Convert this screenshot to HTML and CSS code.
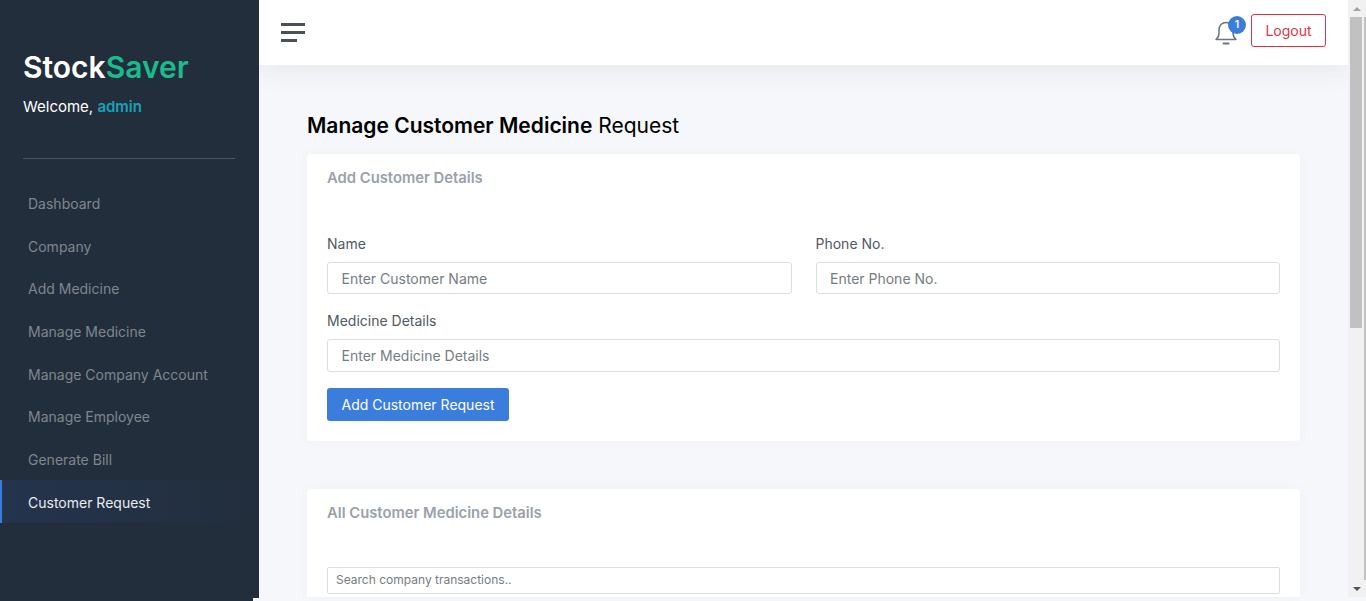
FILE: index.html
```html
<!DOCTYPE html>
<html lang="en">
<head>
    <meta charset="UTF-8">
    <meta name="viewport" content="width=device-width, initial-scale=1.0">
    <title>StockSaver - Customer Request</title>
    <link rel="stylesheet" href="styles.css">
</head>
<body>
    <aside class="sidebar">
        <div class="brand">
            <h1 class="logo">Stock<span class="logo-accent">Saver</span></h1>
            <p class="welcome">Welcome, <span class="welcome-name">admin</span></p>
        </div>
        <hr class="side-line">
        <nav class="side-nav">
            <a href="#">Dashboard</a>
            <a href="#">Company</a>
            <a href="#">Add Medicine</a>
            <a href="#">Manage Medicine</a>
            <a href="#">Manage Company Account</a>
            <a href="#">Manage Employee</a>
            <a href="#">Generate Bill</a>
            <a href="#" class="active">Customer Request</a>
        </nav>
    </aside>

    <div class="page">
        <header class="topbar">
            <button class="menu-btn" aria-label="Menu">
                <span class="bar"></span>
                <span class="bar"></span>
                <span class="bar bar-short"></span>
            </button>
            <div class="top-right">
                <div class="bell">
                    <svg width="24" height="26" viewBox="0 0 24 26" fill="none" stroke="#6c757d" stroke-width="1.5">
                        <path d="M2 19.500c2-1.600 3-3.400 3-6.500V10c0-4.400 3-7.500 7-7.500s7 3.100 7 7.500v3c0 3.100 1 4.900 3 6.500z" stroke-linejoin="round"/>
                        <path d="M9.500 23.500h5" stroke-width="2" stroke-linecap="round"/>
                    </svg>
                    <span class="badge">1</span>
                </div>
                <a href="#" class="logout">Logout</a>
            </div>
        </header>

        <main class="content">
            <h2 class="page-title"><strong>Manage Customer Medicine</strong> Request</h2>

            <section class="card card-form">
                <h3 class="card-title">Add Customer Details</h3>
                <form class="form">
                    <div class="form-row">
                        <div class="field">
                            <label for="name">Name</label>
                            <input type="text" id="name" placeholder="Enter Customer Name">
                        </div>
                        <div class="field">
                            <label for="phone">Phone No.</label>
                            <input type="text" id="phone" placeholder="Enter Phone No.">
                        </div>
                    </div>
                    <div class="field field-wide">
                        <label for="details">Medicine Details</label>
                        <input type="text" id="details" placeholder="Enter Medicine Details">
                    </div>
                    <button type="button" class="btn-add">Add Customer Request</button>
                </form>
            </section>

            <section class="card card-list">
                <h3 class="card-title">All Customer Medicine Details</h3>
                <input type="text" class="search" placeholder="Search company transactions..">
            </section>
        </main>
    </div>

    <div class="scrollbar">
        <span class="arrow arrow-up"></span>
        <div class="track"><div class="thumb"></div></div>
        <span class="arrow arrow-down"></span>
    </div>
</body>
</html>
```

FILE: styles.css
```css
* {
    box-sizing: border-box;
}

html, body {
    height: 100%;
}

body {
    margin: 0;
    display: flex;
    overflow: hidden;
    font-family: Inter, 'Liberation Sans', sans-serif;
    background-color: #f5f7fb;
}

.sidebar {
    position: relative;
    width: 259px;
    flex-shrink: 0;
    background-color: #222e3c;
    color: #fff;
}

/* small notch at the bottom corner */
.sidebar::after {
    content: "";
    position: absolute;
    right: 0;
    bottom: 0;
    width: 6px;
    height: 3px;
    background-color: #f5f7fb;
}

.brand {
    padding: 48px 23px 0;
}

.logo {
    margin: 0;
    font-size: 30px;
    line-height: 38px;
    font-weight: 600;
}

.logo-accent {
    color: #1cbb8c;
}

.welcome {
    margin: 11px 0 0;
    font-size: 15px;
    line-height: 20px;
}

.welcome-name {
    color: #17a2b8;
    font-weight: 600;
}

.side-line {
    margin: 41px 24px 0 23px;
    border: 0;
    border-top: 1px solid #4e5863;
}

.side-nav {
    display: flex;
    flex-direction: column;
    margin-top: 22px;
}

.side-nav a {
    display: block;
    height: 42.700px;
    padding: 0 26px;
    border-left: 2px solid transparent;
    color: #7f868e;
    font-size: 14px;
    line-height: 46px;
    text-decoration: none;
}

.side-nav a.active {
    color: #e9ecef;
    border-left-color: #3b7ddd;
    background: linear-gradient(90deg, #24344d, #222e3c);
}

.page {
    flex: 1;
    min-width: 0;
}

.topbar {
    height: 65px;
    display: flex;
    align-items: center;
    justify-content: space-between;
    padding: 0 22px;
    background-color: #fff;
    box-shadow: 0 0 32px rgba(33, 37, 41, 0.1);
}

.menu-btn {
    display: flex;
    flex-direction: column;
    gap: 5px;
    padding: 0;
    border: 0;
    background: none;
}

.bar {
    display: block;
    width: 24px;
    height: 3px;
    background-color: #495057;
}

.bar-short {
    width: 16px;
}

.top-right {
    display: flex;
    align-items: center;
    gap: 13px;
    margin-bottom: 4px;
}

.bell {
    position: relative;
    width: 24px;
    height: 26px;
    margin-top: 4px;
}

.bell svg {
    display: block;
}

.badge {
    position: absolute;
    top: -4px;
    left: 14px;
    width: 18px;
    height: 18px;
    border-radius: 50%;
    background-color: #3b7ddd;
    color: #fff;
    font-size: 10.500px;
    font-weight: 600;
    line-height: 18px;
    text-align: center;
}

.logout {
    display: block;
    width: 75px;
    height: 33px;
    border: 1px solid #dc3545;
    border-radius: 3px;
    color: #dc3545;
    font-size: 14px;
    line-height: 31px;
    text-align: center;
    text-decoration: none;
}

.content {
    padding: 48px 48px 0;
}

.page-title {
    margin: 0;
    font-size: 21px;
    line-height: 25px;
    font-weight: 400;
    color: #000;
}

.page-title strong {
    font-weight: 600;
}

.card {
    margin-top: 16px;
    padding: 15px 20px 0;
    background-color: #fff;
    border-radius: 4px;
    box-shadow: 0 0 14px rgba(33, 37, 41, 0.03);
}

.card-form {
    height: 287px;
}

.card-list {
    margin-top: 48px;
    height: 108px;
    border-radius: 4px 4px 0 0;
}

.card-title {
    margin: 0;
    font-size: 14.800px;
    line-height: 18px;
    font-weight: 600;
    color: #9aa1a9;
}

.form {
    margin-top: 48px;
}

.form-row {
    display: flex;
    gap: 24px;
}

.form-row .field {
    flex: 1;
}

.field {
    margin-bottom: 18px;
}

.field label {
    display: block;
    margin-bottom: 9px;
    font-size: 14px;
    line-height: 18px;
    color: #51585f;
}

.field input {
    display: block;
    width: 100%;
    height: 32px;
    padding: 0 13.500px;
    border: 1px solid #dadee3;
    border-radius: 3px;
    font-family: inherit;
    font-size: 14px;
    color: #495057;
    background-color: #fff;
}

.field-wide {
    margin-bottom: 16px;
}

.field-wide input {
    height: 33px;
}

input::placeholder {
    color: #757c83;
    opacity: 1;
}

.btn-add {
    display: block;
    width: 182px;
    height: 33px;
    padding: 0;
    border: 0;
    border-radius: 3px;
    background-color: #3b7ddd;
    color: #fff;
    font-family: inherit;
    font-size: 14px;
}

.search {
    display: block;
    width: 100%;
    height: 27px;
    margin-top: 45px;
    padding: 0 8px 2px;
    border: 1px solid #dadee3;
    border-radius: 2px;
    font-family: inherit;
    font-size: 12px;
    background-color: #fff;
}

.scrollbar {
    width: 18px;
    height: 597px;
    flex-shrink: 0;
    display: flex;
    flex-direction: column;
    background-color: #f1f1f1;
}

.arrow {
    height: 17px;
    flex-shrink: 0;
    display: flex;
    align-items: center;
    justify-content: center;
}

.arrow::before {
    content: "";
    border-left: 4px solid transparent;
    border-right: 4px solid transparent;
}

.arrow-up::before {
    border-bottom: 4px solid #a3a3a3;
}

.arrow-down::before {
    border-top: 4px solid #505050;
}

.track {
    flex: 1;
    width: 16px;
    margin-left: 2px;
    border-right: 2px solid #c1c1c1;
}

.thumb {
    width: 12px;
    height: 311px;
    background-color: #c1c1c1;
}
```
